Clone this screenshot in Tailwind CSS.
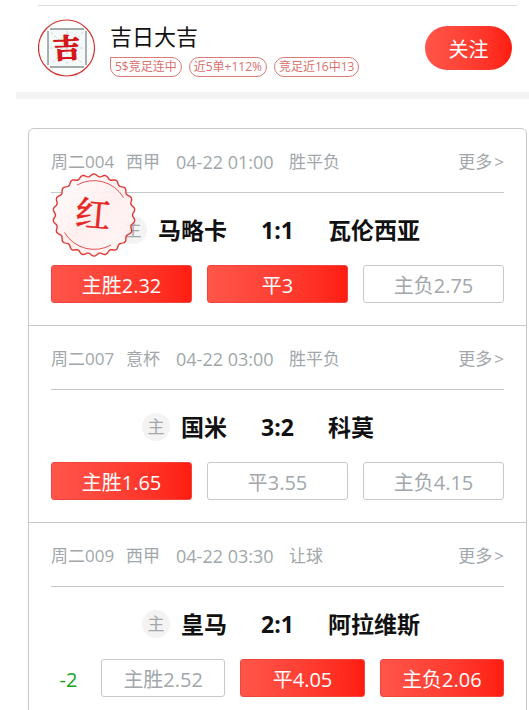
<!DOCTYPE html>
<html lang="zh-CN">
<head>
  <meta charset="UTF-8" />
  <meta name="viewport" content="width=device-width, initial-scale=1.0"/>
  <title>吉日大吉</title>
  <script src="https://cdn.jsdelivr.net/npm/@tailwindcss/browser@4"></script>
</head>
<body class="bg-white pl-4 font-['Open_Sans','Noto_Sans_CJK_SC',sans-serif] text-[#111]">

  <!-- Author header -->
  <header class="pt-[5px] border-b-7 border-[#f3f3f3]">
    <div class="ml-[22px] mr-3 border-t border-[#dcdcdc]"></div>
    <div class="ml-[22px] mr-[17px] pt-[13px] pb-[15px] flex items-center">
      <svg class="size-[58px] shrink-0" viewBox="0 0 58 58" role="img" aria-label="吉">
        <circle cx="28.500" cy="29" r="28" fill="#fbfdfd" stroke="#d2332f" stroke-width="1.2"/>
        <rect x="10" y="10" width="38" height="38" fill="#f4f9f9"/>
        <path d="M13 13L45 45M45 13L13 45M29 12V46M12 29H46" stroke="#c9cfcf" stroke-width=".8" stroke-dasharray="3 2"/>
        <path d="M10 12V46M48 12V46M12 10H46M12 48H46" stroke="#8a8f8f" stroke-width="1.4"/>
        <text x="28.500" y="39" text-anchor="middle" font-size="27" font-weight="700" fill="#d4151a" stroke="#d4151a" stroke-width="1.2" stroke-linejoin="round" font-family="Noto Serif CJK SC, serif" transform="rotate(-3 29 29)">吉</text>
      </svg>
      <div class="ml-[14px] flex-1">
        <h1 class="text-[22px] leading-8">吉日大吉</h1>
        <div class="mt-[5px] flex gap-[7px] text-xs leading-[18px] text-[#d9716d] whitespace-nowrap">
          <span class="border border-[#dc7a77] rounded-full rounded-tl-none px-1">5$竞足连中</span>
          <span class="border border-[#dc7a77] rounded-full px-1">近5单+112%</span>
          <span class="border border-[#dc7a77] rounded-full px-1">竞足近16中13</span>
        </div>
      </div>
      <button type="button" class="w-[87px] h-11 pt-[3px] rounded-full bg-linear-to-r from-[#ff554a] to-[#ff1c10] text-xl text-white">关注</button>
    </div>
  </header>

  <!-- Match list -->
  <main class="ml-3 mr-[2px] mt-[29px] border border-[#c5c9cb] rounded-md divide-y divide-[#c5c9cb]">

    <section class="relative px-[22px] pb-[22px]">
      <div class="pt-[21px] pb-[18px] flex text-[17px] leading-6 text-[#a1a7aa] border-b border-[#c5c9cb] whitespace-nowrap">
        <span class="w-[75px]">周二004</span>
        <span class="w-[50px]">西甲</span>
        <span class="w-[113px] text-lg leading-6">04-22 01:00</span>
        <span>胜平负</span>
        <a href="#" class="ml-auto flex gap-[2px]">更多<span>&gt;</span></a>
      </div>
      <div class="pt-[23px] pb-[21px] flex items-center text-[23px] leading-7 font-bold">
        <div class="flex-1 flex justify-end items-center gap-[11px]">
          <span class="size-7 rounded-full bg-[#f3f3f3] text-center text-[17px] leading-7 font-normal text-[#a1a7aa]">主</span>
          <span>马略卡</span>
        </div>
        <span class="w-[101px] text-center">1:1</span>
        <span class="flex-1">瓦伦西亚</span>
      </div>
      <div class="flex gap-[15px] text-xl">
        <button type="button" class="flex-1 h-[38px] pt-[3px] rounded-[3px] border border-[#f0443c] bg-linear-to-r from-[#ff554a] to-[#ff1c10] text-white">主胜2.32</button>
        <button type="button" class="flex-1 h-[38px] pt-[3px] rounded-[3px] border border-[#f0443c] bg-linear-to-r from-[#ff554a] to-[#ff1c10] text-white">平3</button>
        <button type="button" class="flex-1 h-[38px] pt-[3px] rounded-[3px] border border-[#c5c9cb] text-[#a1a7aa]">主负2.75</button>
      </div>

      <!-- Winning stamp -->
      <svg class="absolute left-[23px] top-[44px] size-[84px]" viewBox="-42 -42 84 84" role="img" aria-label="红">
        <defs>
          <linearGradient id="stampFill" x1="0" y1="0" x2="1" y2="1">
            <stop offset="0" stop-color="#fff" stop-opacity=".96"/>
            <stop offset=".5" stop-color="#ffeeee" stop-opacity=".94"/>
            <stop offset="1" stop-color="#fff6f6" stop-opacity=".8"/>
          </linearGradient>
        </defs>
        <path id="stampEdge" fill="url(#stampFill)" stroke="#dd3a34" stroke-width="1.4" stroke-linejoin="round"/>
        <path d="M-17 -30A34.500 34.500 0 0 1 29.500 -17.500M-29.500 17.500A34.500 34.500 0 0 0 17 30" fill="none" stroke="#e0524d" stroke-width="1"/>
        <text x="-1" y="12" text-anchor="middle" font-size="35" fill="#e3261f" stroke="#e3261f" stroke-width=".6" font-family="Noto Serif CJK SC, serif" transform="rotate(5)">红</text>
      </svg>
    </section>

    <section class="px-[22px] pb-[22px]">
      <div class="pt-[21px] pb-[18px] flex text-[17px] leading-6 text-[#a1a7aa] border-b border-[#c5c9cb] whitespace-nowrap">
        <span class="w-[75px]">周二007</span>
        <span class="w-[50px]">意杯</span>
        <span class="w-[113px] text-lg leading-6">04-22 03:00</span>
        <span>胜平负</span>
        <a href="#" class="ml-auto flex gap-[2px]">更多<span>&gt;</span></a>
      </div>
      <div class="pt-[23px] pb-[21px] flex items-center text-[23px] leading-7 font-bold">
        <div class="flex-1 flex justify-end items-center gap-[11px]">
          <span class="size-7 rounded-full bg-[#f3f3f3] text-center text-[17px] leading-7 font-normal text-[#a1a7aa]">主</span>
          <span>国米</span>
        </div>
        <span class="w-[101px] text-center">3:2</span>
        <span class="flex-1">科莫</span>
      </div>
      <div class="flex gap-[15px] text-xl">
        <button type="button" class="flex-1 h-[38px] pt-[3px] rounded-[3px] border border-[#f0443c] bg-linear-to-r from-[#ff554a] to-[#ff1c10] text-white">主胜1.65</button>
        <button type="button" class="flex-1 h-[38px] pt-[3px] rounded-[3px] border border-[#c5c9cb] text-[#a1a7aa]">平3.55</button>
        <button type="button" class="flex-1 h-[38px] pt-[3px] rounded-[3px] border border-[#c5c9cb] text-[#a1a7aa]">主负4.15</button>
      </div>
    </section>

    <section class="px-[22px] pb-[22px]">
      <div class="pt-[21px] pb-[18px] flex text-[17px] leading-6 text-[#a1a7aa] border-b border-[#c5c9cb] whitespace-nowrap">
        <span class="w-[75px]">周二009</span>
        <span class="w-[50px]">西甲</span>
        <span class="w-[113px] text-lg leading-6">04-22 03:30</span>
        <span>让球</span>
        <a href="#" class="ml-auto flex gap-[2px]">更多<span>&gt;</span></a>
      </div>
      <div class="pt-[23px] pb-[21px] flex items-center text-[23px] leading-7 font-bold">
        <div class="flex-1 flex justify-end items-center gap-[11px]">
          <span class="size-7 rounded-full bg-[#f3f3f3] text-center text-[17px] leading-7 font-normal text-[#a1a7aa]">主</span>
          <span>皇马</span>
        </div>
        <span class="w-[101px] text-center">2:1</span>
        <span class="flex-1">阿拉维斯</span>
      </div>
      <div class="flex items-center gap-[15px] text-xl">
        <span class="w-[35px] pt-[3px] text-center text-[#17a31b]">-2</span>
        <button type="button" class="flex-1 h-[38px] pt-[3px] rounded-[3px] border border-[#c5c9cb] text-[#a1a7aa]">主胜2.52</button>
        <button type="button" class="flex-1 h-[38px] pt-[3px] rounded-[3px] border border-[#f0443c] bg-linear-to-r from-[#ff554a] to-[#ff1c10] text-white">平4.05</button>
        <button type="button" class="flex-1 h-[38px] pt-[3px] rounded-[3px] border border-[#f0443c] bg-linear-to-r from-[#ff554a] to-[#ff1c10] text-white">主负2.06</button>
      </div>
    </section>

  </main>

  <script>
    // wavy edge of the stamp
    const points = [];
    for (let i = 0; i < 264; i++) {
      const a = (i / 264) * Math.PI * 2;
      const r = 39.8 + 1.3 * Math.cos(a * 22);
      points.push(`${(r * Math.sin(a)).toFixed(2)} ${(-r * Math.cos(a)).toFixed(2)}`);
    }
    document.getElementById("stampEdge").setAttribute("d", `M${points.join("L")}Z`);
  </script>

</body>
</html>
